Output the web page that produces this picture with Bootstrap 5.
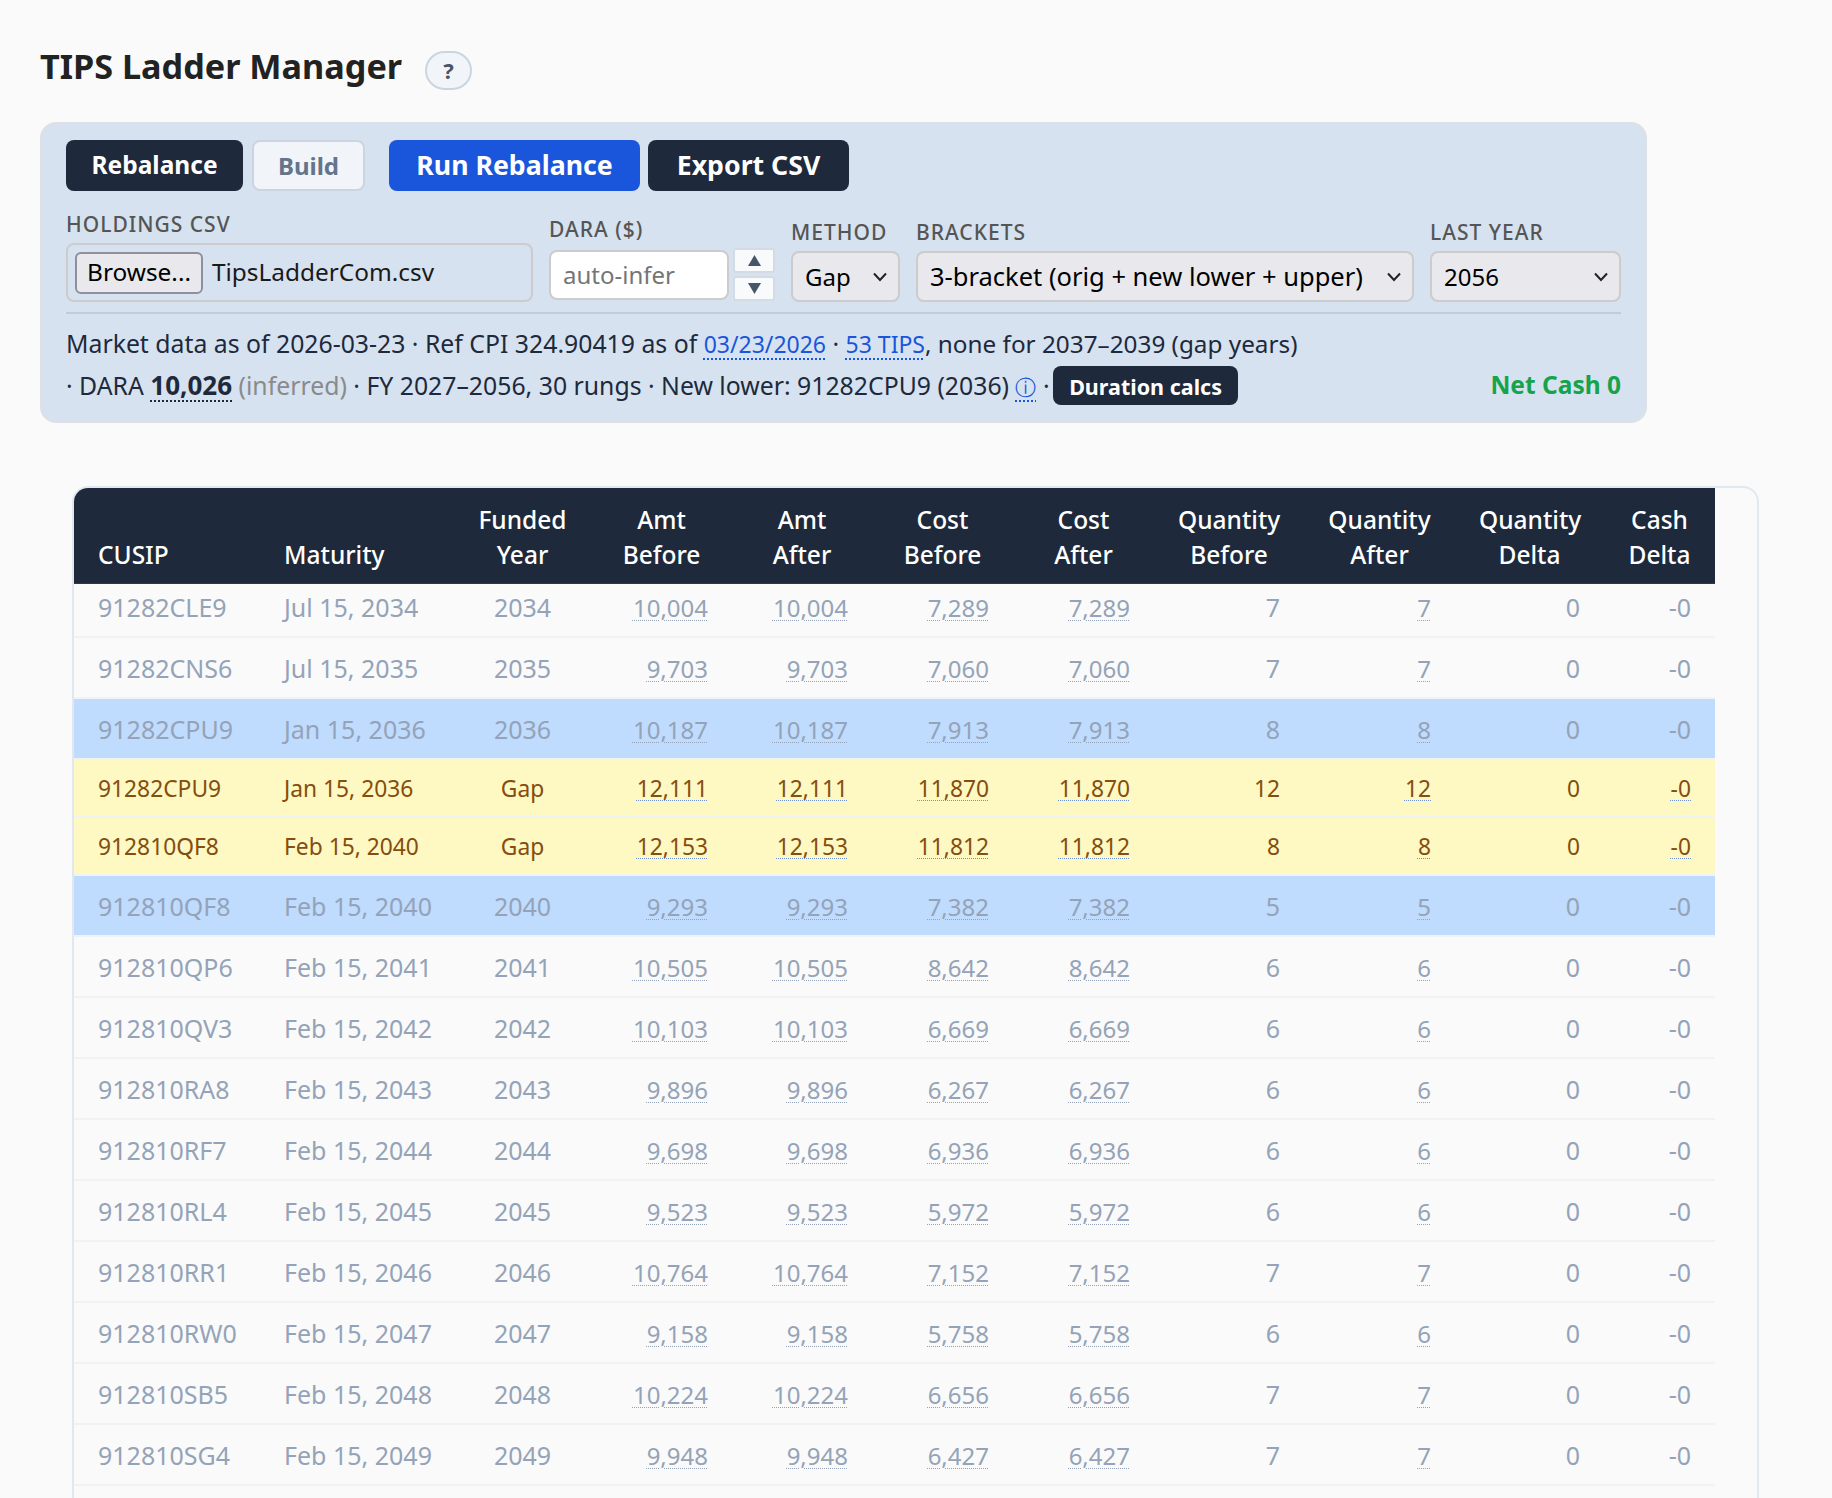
<!doctype html>
<html lang="en"><head><meta charset="utf-8"><title>TIPS Ladder Manager</title>
<link href="https://cdn.jsdelivr.net/npm/bootstrap@5.3.0/dist/css/bootstrap.min.css" rel="stylesheet">
<style>
html,body{height:1498px;overflow:hidden;background:#fafafa}
body{font-family:"Noto Sans","Open Sans",sans-serif;color:#1e293b;padding:40px}
.ttl{font-size:34.2px;font-weight:700;color:#222;line-height:52px;margin:0}
.helpb{width:47px;height:39px;border-radius:20px;border:2px solid #cbd5e1;background:#f1f5f9;color:#475569;font-weight:700;font-size:22px;line-height:1;margin-left:23px;padding:0;margin-top:8px}
.panel{width:1607px;height:301px;background:#d6e2ef;border:2px solid #dde1e6;border-radius:16px;padding:16px 24px;margin-top:30px}
.tb{font-size:26.7px;font-weight:700;height:51px;border-radius:8px;padding:0;border:0;color:#fff;background:#1e293b}
.tb-a{width:177px;font-size:24.5px}.tb-b{width:113px;font-size:24px;background:#f1f5f9;color:#64748b;border:2px solid #cbd5e1;margin-left:9px}
.tb-r{width:251px;background:#1a56db;margin-left:24px}.tb-e{width:201px;margin-left:8px}
.lab{font-size:21px;letter-spacing:1px;color:#555;font-weight:500;line-height:30px;margin-bottom:4px;text-transform:uppercase;white-space:nowrap}
.filebox{width:467px;height:59px;border:2px solid #ccc;border-radius:8px;padding:6px 7px;font-size:24.4px;color:#1a1a1a;gap:9px}
.browse{width:128px;height:42px;background:#e9e9ed;border:2px solid #8f8f9d;border-radius:6px;color:#000;font-size:24.4px;padding:0}
.numin{width:180px;height:50px;border:2px solid #ccc;border-radius:8px;background:#fff;font-size:24px;padding:0 12px;color:#666}
.numin::placeholder{color:#757575}
.spin{width:42px;height:25px;background:#f8fafc;border:2px solid #d5dbe3;border-radius:3px;padding:0;line-height:1;display:flex;align-items:center;justify-content:center}
.spin svg{width:13px;height:11px;fill:#475569}
.spins{gap:3px;margin-left:4px}
.darab{margin-bottom:1px}
.sel.form-select{height:51px;background-color:#e9e9ed;border:2px solid #ccc;border-radius:8px;font-size:24px;color:#000;padding:0 30px 0 12px;background-size:14px 10px;background-position:right 11px center;background-image:url("data:image/svg+xml,%3csvg xmlns='http://www.w3.org/2000/svg' viewBox='0 0 14 10'%3e%3cpath fill='none' stroke='%23222' stroke-width='2' d='M1 1.5l6 6.5 6-6.5'/%3e%3c/svg%3e")}
.s-m{width:109px}.s-b{width:498px;font-size:25.5px!important}.s-y{width:191px}
.fields{margin-top:18px}
.divl{border-top:2px solid #c0cdd9;margin-top:10px}
.stat{font-size:24.8px;height:42px;line-height:42px;color:#1e293b;white-space:nowrap;margin-top:8px}
.lnk{color:#1a56db;font-size:23px;text-decoration:underline dotted 2px;text-underline-offset:5px}
.tail{font-size:24.3px}
.dot{text-decoration:underline dotted 2px #1e293b;text-underline-offset:5px;font-weight:700;font-size:26px}
.faint{color:#8a8a8a}
.inf{font-size:21px}
.durb{width:185px;height:39px;font-size:21.5px;font-weight:700;color:#fff;background:#1e293b;border:0;border-radius:8px;padding:0;margin-left:-3px;vertical-align:baseline}
.net{color:#16a34a;font-weight:700;font-size:24.5px}
.tcard{width:1687px;height:1100px;margin:63px 0 0 32px;border:2px solid #e2e8f0;border-radius:16px;overflow:hidden}
.lad{width:1641px;table-layout:fixed;border-collapse:collapse;font-size:25px;line-height:36px;margin:0}
.lad th{background:#1e293b;color:#fff;font-size:24.5px;font-weight:500;line-height:35px;padding:14px 24px 11px;vertical-align:bottom;text-align:center;border-bottom:1px solid #2d3a4d}
.lad td{padding:12px 24px 11px;border-bottom:2px solid #f1f2f4;color:#94a3b8;white-space:nowrap;background:#fafafa}
.lad .first td{padding-top:5px}
.lad .bl td{background:#bfdbfe}
.lad .ye td{background:#fef8c2;color:#854d0e;font-size:22.8px;line-height:33px}
.lad td u{font-size:24px;line-height:1;text-decoration:underline dotted 1px #94a3b8;text-underline-offset:3px}
.lad .ye td u{font-size:22.8px;text-decoration-color:#6f8fd0}
.c1{width:186px}.c2{width:194px}.c3{width:137px}.c4{width:141px}.c5{width:140px}.c6{width:141px}.c7{width:141px}.c8{width:150px}.c9{width:151px}.c10{width:149px}.c11{width:111px}
</style></head><body>
<div class="d-flex align-items-center"><h1 class="ttl">TIPS Ladder Manager</h1><button class="helpb">?</button></div>
<div class="panel">
 <div class="d-flex"><button class="tb tb-a">Rebalance</button><button class="tb tb-b">Build</button><button class="tb tb-r">Run Rebalance</button><button class="tb tb-e">Export CSV</button></div>
 <div class="fields d-flex align-items-end">
  <div><div class="lab">Holdings CSV</div><div class="filebox d-flex align-items-center"><button class="browse">Browse...</button><span>TipsLadderCom.csv</span></div></div>
  <div class="ms-3 darab"><div class="lab">DARA ($)</div><div class="d-flex align-items-center"><input class="numin" placeholder="auto-infer"><div class="spins d-flex flex-column"><button class="spin"><svg viewBox="0 0 13 11"><path d="M6.5 0L13 11H0z"/></svg></button><button class="spin"><svg viewBox="0 0 13 11"><path d="M0 0h13L6.5 11z"/></svg></button></div></div></div>
  <div class="ms-3"><div class="lab">Method</div><select class="form-select sel s-m"><option>Gap</option></select></div>
  <div class="ms-3"><div class="lab">Brackets</div><select class="form-select sel s-b"><option>3-bracket (orig + new lower + upper)</option></select></div>
  <div class="ms-3"><div class="lab">Last Year</div><select class="form-select sel s-y"><option>2056</option></select></div>
 </div>
 <div class="divl"></div>
 <div class="stat">Market data as of 2026-03-23 · Ref CPI 324.90419 as of <span class="lnk">03/23/2026</span> · <span class="lnk">53 TIPS</span><span class="tail">, none for 2037–2039 (gap years)</span></div>
 <div class="stat d-flex justify-content-between mt-0"><div>· DARA <span class="dot">10,026</span> <span class="faint">(inferred)</span> · FY 2027–2056, 30 rungs · New lower: 91282CPU9 (2036) <span class="lnk inf">ⓘ</span> · <button class="durb">Duration calcs</button></div><div class="net">Net Cash 0</div></div>
</div>
<div class="tcard">
<table class="lad"><thead><tr><th class="c1 text-start">CUSIP</th><th class="c2 text-start">Maturity</th><th class="c3">Funded Year</th><th class="c4">Amt Before</th><th class="c5">Amt After</th><th class="c6">Cost Before</th><th class="c7">Cost After</th><th class="c8">Quantity Before</th><th class="c9">Quantity After</th><th class="c10">Quantity Delta</th><th class="c11">Cash Delta</th></tr></thead>
<tbody id="tb"></tbody></table></div>
<script>
const R=[["first","91282CLE9","Jul 15, 2034","2034","10,004","7,289","7"],["","91282CNS6","Jul 15, 2035","2035","9,703","7,060","7"],["bl","91282CPU9","Jan 15, 2036","2036","10,187","7,913","8"],["ye","91282CPU9","Jan 15, 2036","Gap","12,111","11,870","12"],["ye","912810QF8","Feb 15, 2040","Gap","12,153","11,812","8"],["bl","912810QF8","Feb 15, 2040","2040","9,293","7,382","5"],["","912810QP6","Feb 15, 2041","2041","10,505","8,642","6"],["","912810QV3","Feb 15, 2042","2042","10,103","6,669","6"],["","912810RA8","Feb 15, 2043","2043","9,896","6,267","6"],["","912810RF7","Feb 15, 2044","2044","9,698","6,936","6"],["","912810RL4","Feb 15, 2045","2045","9,523","5,972","6"],["","912810RR1","Feb 15, 2046","2046","10,764","7,152","7"],["","912810RW0","Feb 15, 2047","2047","9,158","5,758","6"],["","912810SB5","Feb 15, 2048","2048","10,224","6,656","7"],["","912810SG4","Feb 15, 2049","2049","9,948","6,427","7"]];
document.getElementById('tb').innerHTML=R.map(r=>{const y=r[0]=="ye",c=y?"<u>-0</u>":"-0";return `<tr class="${r[0]}"><td>${r[1]}</td><td>${r[2]}</td><td class="text-center">${r[3]}</td><td class="text-end"><u>${r[4]}</u></td><td class="text-end"><u>${r[4]}</u></td><td class="text-end"><u>${r[5]}</u></td><td class="text-end"><u>${r[5]}</u></td><td class="text-end">${r[6]}</td><td class="text-end"><u>${r[6]}</u></td><td class="text-end">0</td><td class="text-end">${c}</td></tr>`}).join('');
</script>
<script src="https://cdn.jsdelivr.net/npm/bootstrap@5.3.0/dist/js/bootstrap.bundle.min.js"></script>
</body></html>
